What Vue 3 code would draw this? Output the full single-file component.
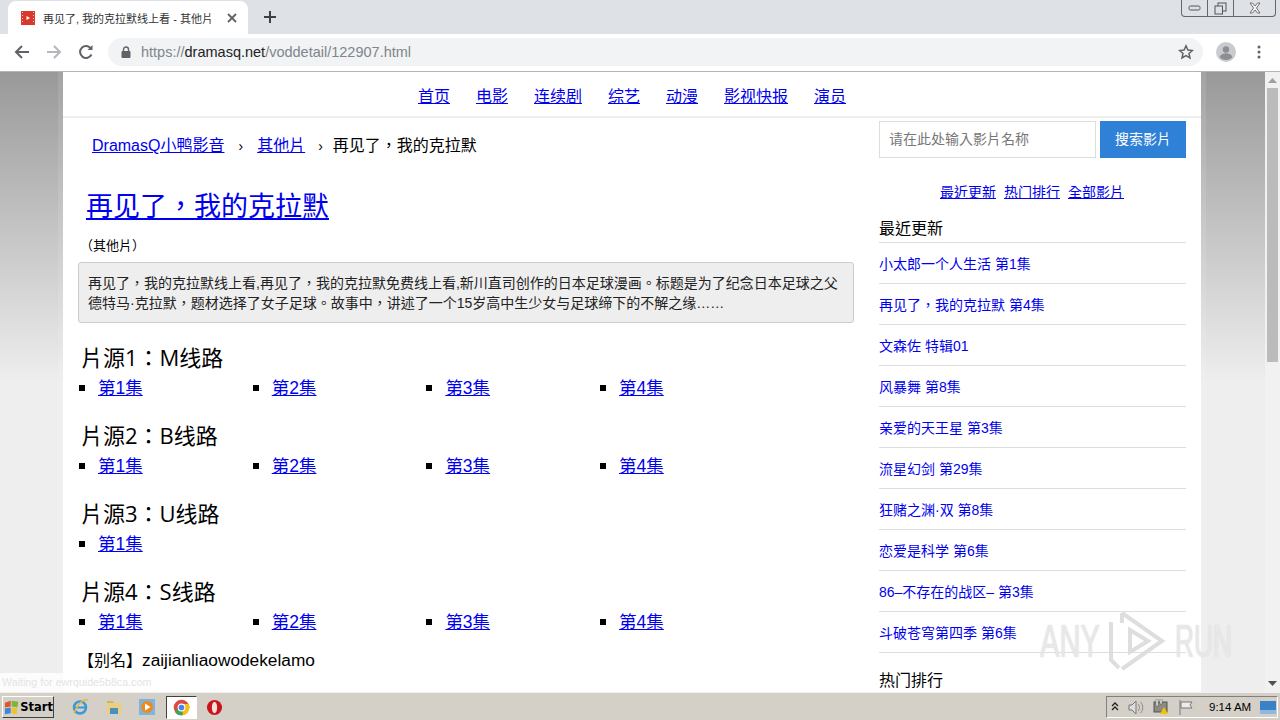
<template>
  <div class="screen">
    <div class="tabstrip">
      <div class="tab">
        <svg class="favicon" width="14" height="14" viewBox="0 0 14 14"><rect width="14" height="14" fill="#d9392c"/><path d="M1 1h1v1H1zM1 4h1v1H1zM1 7h1v1H1zM1 10h1v1H1zM12 1h1v1h-1zM12 4h1v1h-1zM12 7h1v1h-1zM12 10h1v1h-1z" fill="#f6c8c0"/><path d="M5.500 5l3.500 2-3.500 2z" fill="#fff"/></svg>
        <span class="tab-title">再见了, 我的克拉默线上看 - 其他片</span>
        <svg class="tab-close" width="10" height="10" viewBox="0 0 10 10"><path d="M1 1l8 8M9 1l-8 8" stroke="#5f6368" stroke-width="1.800"/></svg>
      </div>
      <svg class="new-tab" width="14" height="14" viewBox="0 0 14 14"><path d="M7 1v12M1 7h12" stroke="#3c4043" stroke-width="2"/></svg>
      <div class="win-buttons">
        <span class="win-btn"><svg width="14" height="8" viewBox="0 0 14 8"><rect x="1" y="2" width="11" height="4" rx="1.500" fill="none" stroke="#555"/></svg></span>
        <span class="win-btn"><svg width="13" height="13" viewBox="0 0 13 13"><rect x="4" y="1" width="8" height="8" fill="none" stroke="#555"/><rect x="1" y="4" width="7.500" height="8" fill="#dee1e6" stroke="#555"/></svg></span>
        <span class="win-btn close"><svg width="14" height="12" viewBox="0 0 14 12"><path d="M2 1h2.500L7 4l2.500-3H12L8.500 6l3.500 5H9.500L7 8l-2.500 3H2l3.500-5z" fill="#f2f2f2" stroke="#666" stroke-width=".9"/></svg></span>
      </div>
    </div>
    <div class="toolbar">
      <svg class="tool" width="16" height="16" viewBox="0 0 16 16"><path d="M15 8H2M8 2L2 8l6 6" fill="none" stroke="#5f6368" stroke-width="2"/></svg>
      <svg class="tool" width="16" height="16" viewBox="0 0 16 16"><path d="M1 8h13M8 2l6 6-6 6" fill="none" stroke="#b4b7bb" stroke-width="2"/></svg>
      <svg class="tool" width="16" height="16" viewBox="0 0 16 16"><path d="M13.500 10.500A6 6 0 1 1 13 4.500" fill="none" stroke="#5f6368" stroke-width="2"/><path d="M14.500 1v5h-5z" fill="#5f6368"/></svg>
      <div class="omnibox">
        <svg width="10" height="12" viewBox="0 0 10 12"><rect x="0.500" y="5" width="9" height="7" rx="1" fill="#5f6368"/><path d="M2.500 5V3.500a2.500 2.500 0 0 1 5 0V5" fill="none" stroke="#5f6368" stroke-width="1.400"/></svg>
        <span class="url"><span class="url-dim">https://</span>dramasq.net<span class="url-dim">/voddetail/122907.html</span></span>
        <svg class="star" width="16" height="16" viewBox="0 0 16 16"><path d="M8 1.800l1.900 4.200 4.500.5-3.400 3 1 4.500L8 11.700 4 14l1-4.500-3.400-3 4.500-.5z" fill="none" stroke="#5f6368" stroke-width="1.500"/></svg>
      </div>
      <svg class="avatar" width="20" height="20" viewBox="0 0 20 20"><circle cx="10" cy="10" r="10" fill="#c9cbcf"/><circle cx="10" cy="7.500" r="3.200" fill="#8b8e93"/><path d="M3.500 15c1.500-3 4-3.800 6.500-3.800s5 .8 6.500 3.800c-1.500 1.800-4 3-6.500 3s-5-1.200-6.500-3z" fill="#8b8e93"/></svg>
      <svg class="menu" width="4" height="14" viewBox="0 0 4 14"><circle cx="2" cy="2" r="1.500" fill="#5f6368"/><circle cx="2" cy="7" r="1.500" fill="#5f6368"/><circle cx="2" cy="12" r="1.500" fill="#5f6368"/></svg>
    </div>

    <div class="viewport">
      <div class="page">
        <div class="sheet">
          <nav class="topnav">
            <a v-for="n in navLinks" :key="n" href="#">{{ n }}</a>
          </nav>
          <div class="columns">
            <main class="main">
              <div class="crumbs">
                <a href="#">DramasQ小鸭影音</a>
                <span class="sep first">›</span>
                <a href="#">其他片</a>
                <span class="sep">›</span>
                <span>再见了，我的克拉默</span>
              </div>
              <h1><a href="#">再见了，我的克拉默</a></h1>
              <div class="cat">（其他片）</div>
              <div class="intro">再见了，我的克拉默线上看,再见了，我的克拉默免费线上看,新川直司创作的日本足球漫画。标题是为了纪念日本足球之父德特马·克拉默，题材选择了女子足球。故事中，讲述了一个15岁高中生少女与足球缔下的不解之缘……</div>
              <section v-for="s in sources" :key="s.name" class="source">
                <h2>{{ s.name }}</h2>
                <ul>
                  <li v-for="i in s.count" :key="i"><a href="#">第{{ i }}集</a></li>
                </ul>
              </section>
              <div class="alias">【别名】<span>zaijianliaowodekelamo</span></div>
            </main>
            <aside class="side">
              <div class="search">
                <input placeholder="请在此处输入影片名称">
                <button>搜索影片</button>
              </div>
              <div class="quick">
                <a href="#">最近更新</a>
                <a href="#">热门排行</a>
                <a href="#">全部影片</a>
              </div>
              <h3>最近更新</h3>
              <div v-for="r in recent" :key="r" class="rec">{{ r }}</div>
              <h3 class="hot">热门排行</h3>
            </aside>
          </div>
        </div>
      </div>
      <div class="scrollbar">
        <svg class="scroll-up" width="9" height="5" viewBox="0 0 9 5"><path d="M0 5h9L4.500 0z" fill="#a0a0a0"/></svg>
        <div class="thumb"></div>
        <svg class="scroll-down" width="9" height="5" viewBox="0 0 9 5"><path d="M0 0h9L4.500 5z" fill="#505050"/></svg>
      </div>
      <div class="status">Waiting for ewrquide5b8ca.com</div>
      <div class="watermark">
        <span class="wm-any">ANY</span>
        <svg width="58" height="62" viewBox="0 0 58 62"><path d="M3 12v38l8 8M14 3l40 28-40 28M14 3v10M22 20l18 11-18 11z" fill="none" stroke="#dedede" stroke-width="4"/></svg>
        <span class="wm-run">RUN</span>
      </div>
    </div>

    <footer class="taskbar">
      <div class="start">
        <svg width="17" height="17" viewBox="0 0 16 16"><path d="M1 3l6-2v6l-6 1z" fill="#e2552b"/><path d="M8 1l7 1-1 6-6-1z" fill="#7fb43a"/><path d="M1 9l6-1v6l-6 1z" fill="#3f86d8"/><path d="M8 8l6 1-1 6-5-1z" fill="#f2c029"/></svg>
        <span>Start</span>
      </div>
      <div class="task-icons">
        <svg width="18" height="18" viewBox="0 0 18 18"><circle cx="9" cy="9.500" r="6" fill="none" stroke="#3a9ad9" stroke-width="2.500"/><path d="M3 9.500h12" stroke="#3a9ad9" stroke-width="2"/><path d="M3 15C8 4 13 1 17 2" fill="none" stroke="#e8b93a" stroke-width="1.500"/></svg>
        <svg width="18" height="18" viewBox="0 0 18 18"><path d="M2 5h14v11H2z" fill="#e9cf7e"/><path d="M2 3h6l1 2H2z" fill="#d3b55f"/><path d="M5 10h8v6H5z" fill="#4a90bf"/></svg>
        <svg width="18" height="18" viewBox="0 0 18 18"><rect x="1" y="1" width="16" height="16" fill="#7db4e0"/><circle cx="9" cy="9" r="6" fill="#ee8a1c"/><path d="M7 5.500L12.500 9 7 12.500z" fill="#fff"/></svg>
        <span class="active-task"><svg width="17" height="17" viewBox="0 0 24 24"><circle cx="12" cy="12" r="11" fill="#dd4b3e"/><path d="M12 12L2.500 17.500A11 11 0 0 0 14 22.800z" fill="#3aa757"/><path d="M12 7h10a11 11 0 0 1-8 15.800z" fill="#f4c20d"/><circle cx="12" cy="12" r="5.500" fill="#fff"/><circle cx="12" cy="12" r="4" fill="#4285f4"/></svg></span>
        <svg width="17" height="17" viewBox="0 0 18 18"><circle cx="9" cy="9" r="8" fill="#c8141c"/><ellipse cx="9" cy="9" rx="2.800" ry="6" fill="#f4e0dc"/></svg>
      </div>
      <div class="tray">
        <svg width="8" height="10" viewBox="0 0 8 10"><path d="M1 4l3-3 3 3M1 8l3-3 3 3" fill="none" stroke="#222" stroke-width="1.300"/></svg>
        <svg width="16" height="15" viewBox="0 0 16 15"><path d="M1 5h3l4-4v13l-4-4H1z" fill="#ddd" stroke="#777"/><path d="M10 4c2 2 2 5 0 7M12.500 2c3 3 3 8 0 11" fill="none" stroke="#888"/></svg>
        <svg width="16" height="16" viewBox="0 0 16 16"><rect x="1" y="3" width="13" height="10" fill="#8b8b80" stroke="#555"/><path d="M3 0h2v7H3zM7 0h2v5H7z" fill="#eee" stroke="#555" stroke-width=".5"/><path d="M11 8l4 7H7z" fill="#f5c400"/></svg>
        <svg width="16" height="15" viewBox="0 0 16 15"><path d="M2 0v15" stroke="#777"/><path d="M3 2h11l-2 3 2 3H3z" fill="#ececec" stroke="#777"/></svg>
        <span class="clock">9:14 AM</span>
        <svg width="16" height="13" viewBox="0 0 16 13"><rect width="16" height="13" fill="#3a82c8"/><rect y="9" width="16" height="4" fill="#8fb8dc"/></svg>
      </div>
    </footer>
  </div>
</template>

<script setup>
const navLinks = ['首页', '电影', '连续剧', '综艺', '动漫', '影视快报', '演员']

const sources = [
  { name: '片源1：M线路', count: 4 },
  { name: '片源2：B线路', count: 4 },
  { name: '片源3：U线路', count: 1 },
  { name: '片源4：S线路', count: 4 }
]

const recent = [
  '小太郎一个人生活 第1集',
  '再见了，我的克拉默 第4集',
  '文森佐 特辑01',
  '风暴舞 第8集',
  '亲爱的天王星 第3集',
  '流星幻剑 第29集',
  '狂赌之渊·双 第8集',
  '恋爱是科学 第6集',
  '86–不存在的战区– 第3集',
  '斗破苍穹第四季 第6集'
]
</script>

<style>
html, body {
  margin: 0;
  overflow: hidden;
}
</style>

<style scoped>
.screen {
  width: 1280px;
  height: 720px;
  display: flex;
  flex-direction: column;
  overflow: hidden;
  font-family: "Liberation Sans", "Noto Sans CJK TC", sans-serif;
  color: #000;
}

.tabstrip {
  height: 34px;
  flex: none;
  background: #dee1e6;
  display: flex;
  align-items: flex-end;
  padding-left: 8px;
  position: relative;
}

.tab {
  width: 240px;
  height: 33px;
  box-sizing: border-box;
  background: #fff;
  border-radius: 8px 8px 0 0;
  display: flex;
  align-items: center;
  padding: 0 11px 0 13px;
}

.tab-title {
  font-size: 11px;
  margin-left: 8px;
  color: #333;
  flex: 1;
  white-space: nowrap;
  overflow: hidden;
}

.new-tab {
  margin: 0 0 10px 15px;
}

.win-buttons {
  position: absolute;
  top: 0;
  right: 4px;
  height: 16px;
  display: flex;
  border: 1px solid #666;
  border-top: 0;
  border-radius: 0 0 4px 4px;
}

.win-btn {
  width: 25px;
  height: 16px;
  display: flex;
  align-items: center;
  justify-content: center;
  border-left: 1px solid #666;
}

.win-btn:first-child {
  border-left: 0;
}

.win-btn.close {
  width: 41px;
}

.toolbar {
  height: 38px;
  flex: none;
  box-sizing: border-box;
  background: #fff;
  border-bottom: 1px solid #b4b4b4;
  display: flex;
  align-items: center;
  padding-left: 14px;
  padding-bottom: 1px;
}

.tool {
  margin-right: 16px;
}

.omnibox {
  width: 1095px;
  height: 28px;
  margin-left: -2px;
  border-radius: 14px;
  background: #f1f3f4;
  display: flex;
  align-items: center;
  padding-left: 13px;
  box-sizing: border-box;
}

.url {
  margin-left: 10px;
  font-size: 14.500px;
  color: #222;
  flex: 1;
}

.url-dim {
  color: #80868b;
}

.star {
  margin-right: 9px;
}

.avatar {
  margin-left: 13px;
}

.menu {
  margin-left: 21px;
}

.viewport {
  flex: 1;
  min-height: 0;
  display: flex;
  position: relative;
  overflow: hidden;
  background: #eee linear-gradient(to bottom, #999 0, #eee 310px) no-repeat;
}

.page {
  flex: 1;
  min-width: 0;
  height: 100%;
  padding: 0 64px 0 63px;
}

.sheet {
  width: 1138px;
  height: 100%;
  background: #fff;
  box-shadow: 0 0 0 5px rgba(255, 255, 255, 0.1);
}

.topnav {
  height: 46px;
  box-sizing: border-box;
  border-bottom: 2px solid #eee;
  display: flex;
  justify-content: center;
  align-items: flex-end;
  gap: 26px;
  padding-bottom: 9px;
  font-size: 16px;
}

a {
  color: #00e;
  text-decoration: underline;
}

.columns {
  display: flex;
}

.main {
  width: 791px;
  flex: none;
}

.crumbs {
  display: flex;
  align-items: center;
  font-size: 16px;
  padding: 18px 0 0 29px;
  line-height: 20px;
}

.sep {
  margin: 0 10px 0 13px;
  font-size: 14px;
}

.sep.first {
  margin: 0 14px;
}

h1 {
  margin: 32px 0 0 23px;
  font-size: 27px;
  font-weight: 400;
  line-height: 38px;
}

.cat {
  font-size: 13px;
  margin: 11px 0 0 17px;
  line-height: 18px;
}

.intro {
  margin: 7px 0 0 15px;
  box-sizing: border-box;
  height: 61px;
  padding: 10px 9px 0;
  background: #eee;
  border: 1px solid #ccc;
  border-radius: 3px;
  font-size: 14px;
  line-height: 20px;
  color: #222;
}

.source {
  margin: 0 0 0 18px;
  height: 78px;
}

.source:first-of-type {
  margin-top: 21px;
}

h2 {
  margin: 0;
  height: 30px;
  font-family: "Open Sans", "Noto Sans CJK TC", sans-serif;
  font-size: 22px;
  font-weight: 400;
  line-height: 26px;
}

ul {
  margin: 0;
  padding: 0;
  list-style: none;
  display: flex;
}

li {
  width: 173.700px;
  font-size: 17.500px;
  line-height: 28px;
  padding-left: 17px;
  box-sizing: border-box;
  position: relative;
}

li::before {
  content: "";
  position: absolute;
  left: -2px;
  top: 11px;
  width: 6px;
  height: 6px;
  background: #000;
}

.alias {
  margin: -8px 0 0 15px;
  font-size: 16px;
  line-height: 24px;
}

.alias span {
  font-size: 17.300px;
}

.side {
  width: 307px;
  margin-left: 25px;
  flex: none;
  padding-top: 3px;
}

.search {
  display: flex;
  gap: 4px;
}

input {
  width: 217px;
  height: 37px;
  box-sizing: border-box;
  border: 1px solid #ddd;
  padding: 0 9px 2px;
  font: inherit;
  font-size: 14px;
  outline: 0;
}

input::placeholder {
  color: #777;
}

button {
  width: 86px;
  height: 37px;
  border: 0;
  background: #2f81d8;
  color: #fff;
  font: inherit;
  font-size: 14px;
  padding: 0 0 3px;
}

.quick {
  display: flex;
  justify-content: center;
  gap: 8px;
  font-size: 14px;
  margin-top: 24px;
  padding-right: 1px;
  line-height: 20px;
}

h3 {
  margin: 16px 0 0;
  padding-bottom: 2px;
  font-size: 16px;
  font-weight: 400;
  line-height: 22px;
  border-bottom: 1px solid #ddd;
}

.rec {
  height: 41px;
  box-sizing: border-box;
  border-bottom: 1px solid #ddd;
  font-size: 14px;
  line-height: 42px;
  color: #00e;
}

h3.hot {
  margin-top: 17px;
  border-bottom: 0;
}

.scrollbar {
  width: 15px;
  flex: none;
  background: #f1f1f1;
  position: relative;
}

.scroll-up {
  position: absolute;
  left: 3px;
  top: 6px;
}

.thumb {
  position: absolute;
  top: 16px;
  left: 2px;
  width: 11px;
  height: 274px;
  background: #bbb;
}

.scroll-down {
  position: absolute;
  left: 3px;
  bottom: 6px;
}

.status {
  position: absolute;
  left: 0;
  bottom: 0;
  height: 19px;
  padding: 0 4px 0 2px;
  line-height: 19px;
  font-size: 10.700px;
  color: #e4e4e4;
  background: rgba(255, 255, 255, 0.8);
}

.watermark {
  position: absolute;
  left: 1040px;
  top: 538px;
  height: 62px;
  display: flex;
  align-items: center;
  font-size: 47px;
  line-height: 62px;
  color: #e8e8e8;
  text-shadow: 0 0 2px #d8d8d8;
  pointer-events: none;
}

.wm-any,
.wm-run {
  display: block;
  width: 60px;
  white-space: nowrap;
  transform-origin: left center;
}

.wm-any {
  transform: scaleX(0.62);
  margin-right: 8px;
}

.wm-run {
  transform: scaleX(0.56);
  margin-left: 9px;
}

.taskbar {
  height: 28px;
  flex: none;
  box-sizing: border-box;
  background: #d4d0c8;
  border-top: 1px solid #f2f0ea;
  display: flex;
  align-items: center;
  padding-left: 2px;
  padding-top: 1px;
  position: relative;
}

.start {
  width: 52px;
  height: 22px;
  box-sizing: border-box;
  display: flex;
  align-items: center;
  gap: 1px;
  padding-left: 1px;
  border: 1px solid;
  border-color: #fff #404040 #404040 #fff;
  font-weight: 700;
  font-family: "DejaVu Sans", sans-serif;
}

.start span {
  font-size: 11.500px;
}

.task-icons {
  display: flex;
  align-items: center;
  margin-left: 17px;
  gap: 15.500px;
}

.active-task {
  width: 31px;
  height: 23px;
  margin: 0 -6px;
  box-sizing: border-box;
  display: flex;
  align-items: center;
  justify-content: center;
  background: #fff;
  border: 1px solid;
  border-color: #404040 #fff #fff #404040;
}

.tray {
  margin-left: auto;
  margin-right: 2px;
  width: 172px;
  height: 22px;
  box-sizing: border-box;
  border: 1px solid;
  border-color: #808080 #fff #fff #808080;
  display: flex;
  align-items: center;
  padding-left: 4px;
  gap: 9px;
}

.clock {
  font-size: 11.500px;
  margin-left: 6px;
  white-space: nowrap;
}
</style>
